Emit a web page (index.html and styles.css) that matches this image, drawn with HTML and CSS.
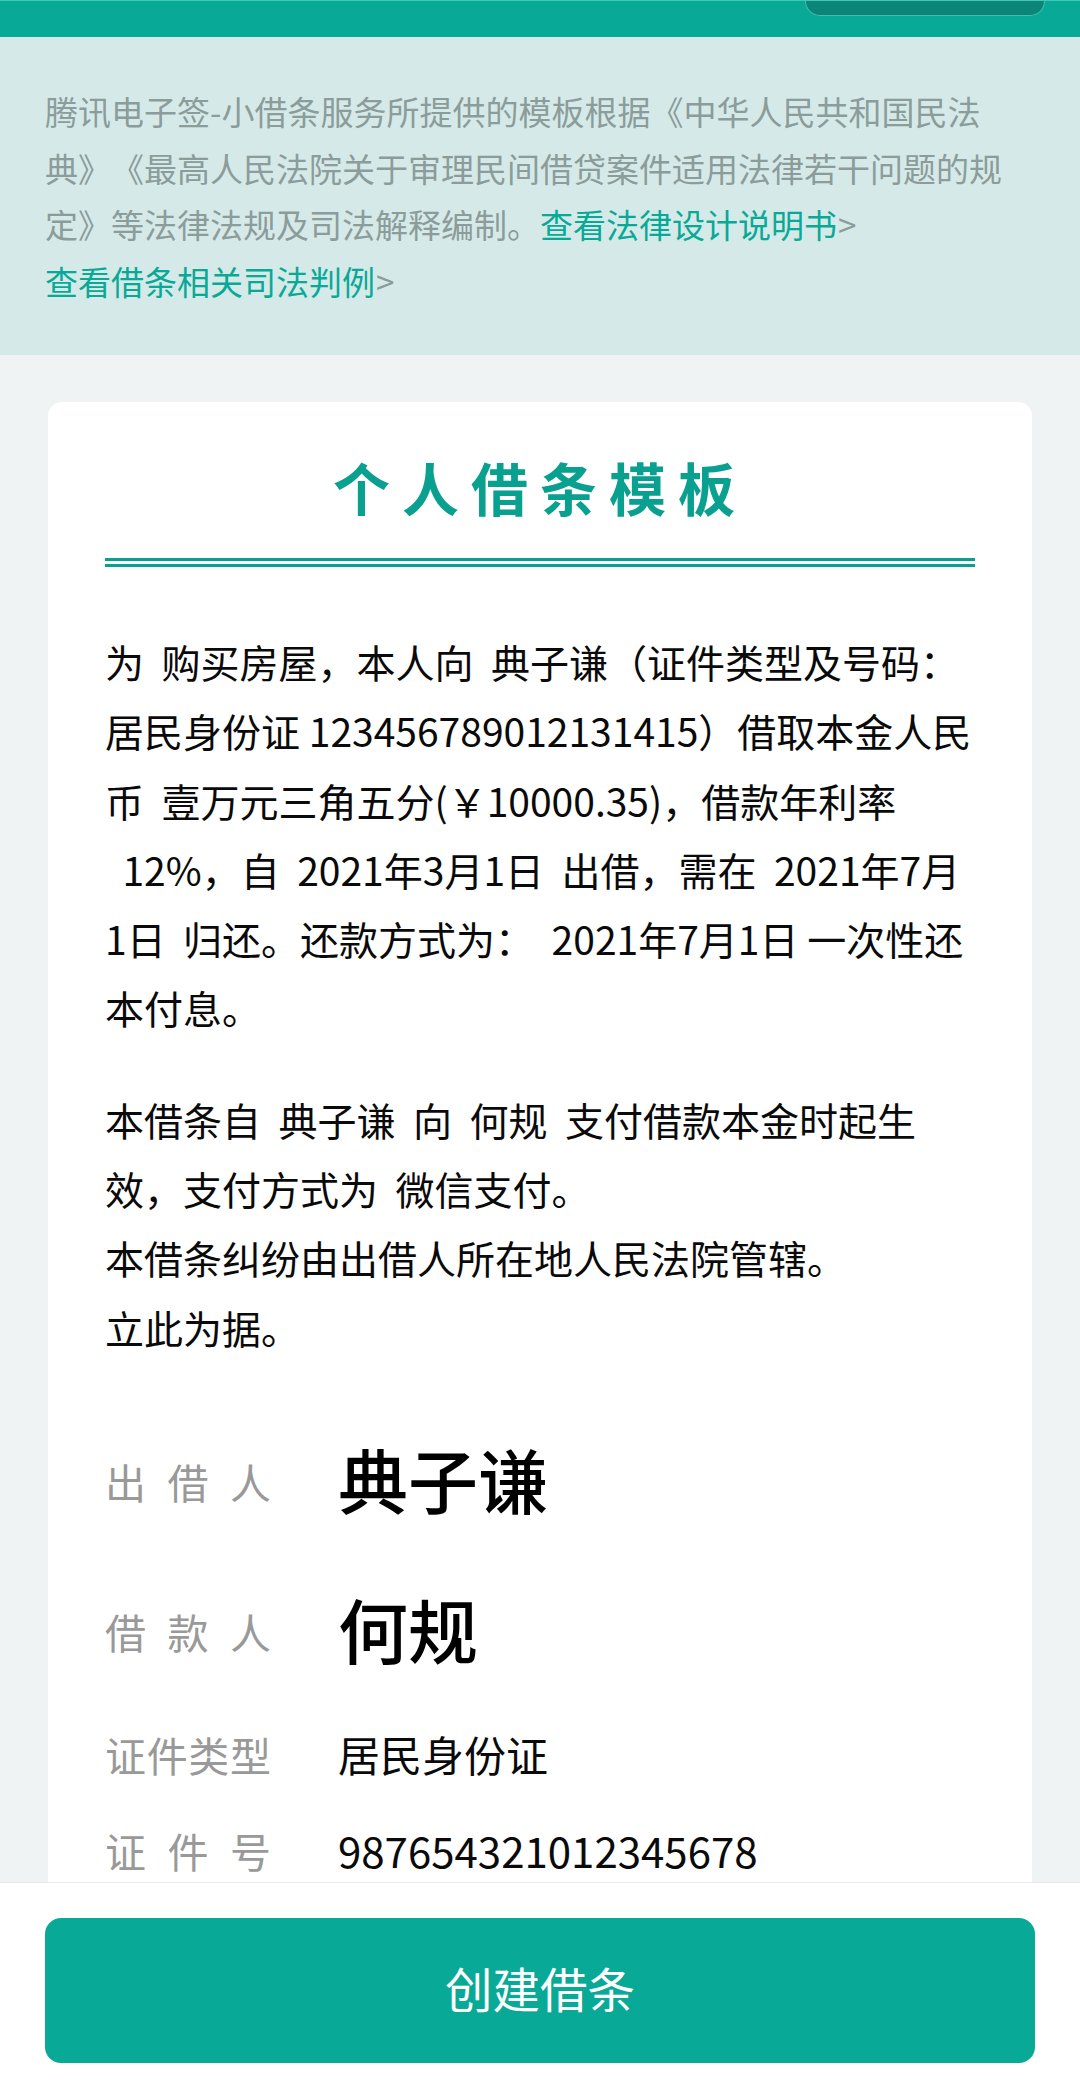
FILE: index.html
```html
<!DOCTYPE html>
<html>
<head>
    <title>个人借条模板</title>
    <meta charset="utf-8">
    <link rel="stylesheet" href="styles.css">
</head>
<body>
    <div class="page">
        <div class="topbar">
            <div class="topbar-pill"></div>
        </div>

        <div class="notice">
            腾讯电子签-小借条服务所提供的模板根据《中华人民共和国民法典》《最高人民法院关于审理民间借贷案件适用法律若干问题的规定》等法律法规及司法解释编制。<a class="notice-link">查看法律设计说明书<span class="notice-arrow">&gt;</span></a><br>
            <a class="notice-link">查看借条相关司法判例<span class="notice-arrow">&gt;</span></a>
        </div>

        <div class="content">
            <div class="card">
                <h1 class="card-title">个人借条模板</h1>
                <div class="title-rule"></div>

                <p class="clause">为&nbsp; 购买房屋，本人向&nbsp; 典子谦（证件类型及号码：居民身份证 123456789012131415）借取本金人民币&nbsp; 壹万元三角五分(￥10000.35)，借款年利率<br>&nbsp;&nbsp;12%，自&nbsp; 2021年3月1日&nbsp; 出借，需在&nbsp; 2021年7月1日&nbsp; 归还。还款方式为：&nbsp; 2021年7月1日 一次性还本付息。</p>

                <p class="clause">本借条自&nbsp; 典子谦&nbsp; 向&nbsp; 何规&nbsp; 支付借款本金时起生效，支付方式为&nbsp; 微信支付。<br>本借条纠纷由出借人所在地人民法院管辖。<br>立此为据。</p>

                <div class="party-list">
                    <div class="party-row sign-row">
                        <span class="party-label">出借人</span>
                        <span class="signature">典子谦</span>
                    </div>
                    <div class="party-row sign-row">
                        <span class="party-label">借款人</span>
                        <span class="signature">何规</span>
                    </div>
                    <div class="party-row info-row">
                        <span class="party-label">证件类型</span>
                        <span class="party-value">居民身份证</span>
                    </div>
                    <div class="party-row info-row">
                        <span class="party-label">证件号</span>
                        <span class="party-value">987654321012345678</span>
                    </div>
                </div>
            </div>
        </div>

        <div class="footer">
            <button class="create-btn">创建借条</button>
        </div>
    </div>
</body>
</html>
```

FILE: styles.css
```css
html, body {
    margin: 0;
    padding: 0;
}
body {
    font-family: "Noto Sans CJK SC", "Noto Sans", sans-serif;
    text-spacing-trim: space-all;
    background-color: #eff3f4;
}
.page {
    display: flex;
    flex-direction: column;
    height: 2097px;
    overflow: hidden;
}
.topbar {
    flex: none;
    display: flex;
    justify-content: flex-end;
    height: 37px;
    padding-right: 35px;
    box-sizing: border-box;
    border-top: 1px solid #43c6b5;
    background-color: #09a997;
}
.topbar-pill {
    width: 238px;
    height: 14px;
    border: 1px solid #45bdae;
    border-top: 0;
    border-radius: 0 0 36px 36px;
    background-color: #0a8578;
}
.notice {
    flex: none;
    height: 318px;
    box-sizing: border-box;
    padding: 46px 72px 0 45px;
    font-size: 33px;
    line-height: 56.5px;
    color: #8b9c9a;
    background-color: #d5eae8;
}
.notice-link {
    color: #09a997;
}
.notice-arrow {
    margin-left: 1px;
    color: #8b9c9a;
}
.content {
    flex: 1;
    min-height: 0;
    padding: 47px 48px 0;
}
.card {
    height: 100%;
    box-sizing: border-box;
    padding: 48px 57px 0;
    border-radius: 14px 14px 0 0;
    background-color: #ffffff;
}
.card-title {
    margin: 0;
    text-align: center;
    font-size: 57px;
    line-height: 72px;
    font-weight: 700;
    letter-spacing: 12px;
    color: #09a08f;
}
.title-rule {
    height: 3px;
    margin-top: 36px;
    border-top: 3px solid #09a08f;
    border-bottom: 3px solid #09a08f;
}
.clause {
    margin: 60px 0 0;
    font-size: 39px;
    line-height: 69.3px;
    color: #0a0a0a;
}
.clause + .clause {
    margin-top: 42px;
}
.party-list {
    margin-top: 44px;
}
.party-row {
    display: flex;
    align-items: center;
}
.party-label {
    flex: none;
    width: 166px;
    margin-right: 67px;
    font-size: 41px;
    white-space: nowrap;
    color: #999999;
    text-align: justify;
    text-align-last: justify;
}
.sign-row {
    height: 150px;
}
.info-row {
    height: 96px;
}
.signature {
    padding-bottom: 4px;
    font-size: 70px;
    font-weight: 500;
    color: #000000;
}
.party-value {
    font-size: 42px;
    color: #0a0a0a;
}
.footer {
    flex: none;
    height: 215px;
    box-sizing: border-box;
    padding: 35px 45px 0;
    border-top: 1px solid #e6e9e9;
    background-color: #ffffff;
}
.create-btn {
    display: block;
    width: 100%;
    height: 145px;
    padding: 0 0 6px;
    border: 0;
    border-radius: 16px;
    font-family: inherit;
    font-size: 47.5px;
    color: #ffffff;
    background-color: #09a997;
}
```
